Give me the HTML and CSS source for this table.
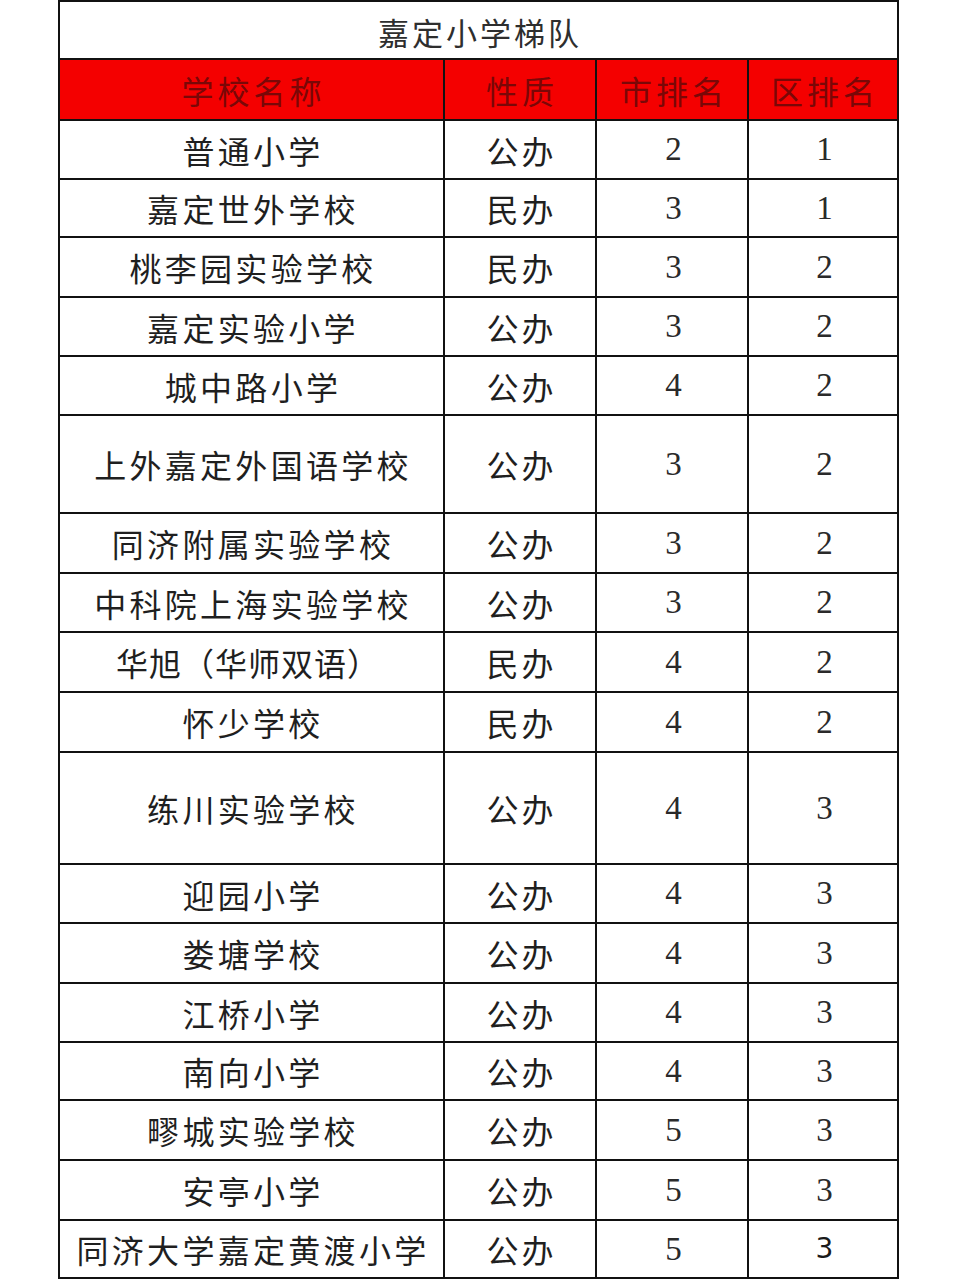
FILE: index.html
```html
<!DOCTYPE html>
<html lang="zh-CN">
<head>
<meta charset="utf-8">
<title>嘉定小学梯队</title>
<link rel="stylesheet" href="styles.css">
</head>
<body>
<div class="sheet">
  <div class="cell title">嘉定小学梯队</div>
  <div class="cell head">学校名称</div>
  <div class="cell head">性质</div>
  <div class="cell head">市排名</div>
  <div class="cell head">区排名</div>

  <div class="cell name">普通小学</div><div class="cell">公办</div><div class="cell num">2</div><div class="cell num">1</div>
  <div class="cell name">嘉定世外学校</div><div class="cell">民办</div><div class="cell num">3</div><div class="cell num">1</div>
  <div class="cell name">桃李园实验学校</div><div class="cell">民办</div><div class="cell num">3</div><div class="cell num">2</div>
  <div class="cell name">嘉定实验小学</div><div class="cell">公办</div><div class="cell num">3</div><div class="cell num">2</div>
  <div class="cell name">城中路小学</div><div class="cell">公办</div><div class="cell num">4</div><div class="cell num">2</div>
  <div class="cell name">上外嘉定外国语学校</div><div class="cell">公办</div><div class="cell num">3</div><div class="cell num">2</div>
  <div class="cell name">同济附属实验学校</div><div class="cell">公办</div><div class="cell num">3</div><div class="cell num">2</div>
  <div class="cell name">中科院上海实验学校</div><div class="cell">公办</div><div class="cell num">3</div><div class="cell num">2</div>
  <div class="cell name paren">华旭（华师双语）</div><div class="cell">民办</div><div class="cell num">4</div><div class="cell num">2</div>
  <div class="cell name">怀少学校</div><div class="cell">民办</div><div class="cell num">4</div><div class="cell num">2</div>
  <div class="cell name">练川实验学校</div><div class="cell">公办</div><div class="cell num">4</div><div class="cell num">3</div>
  <div class="cell name">迎园小学</div><div class="cell">公办</div><div class="cell num">4</div><div class="cell num">3</div>
  <div class="cell name">娄塘学校</div><div class="cell">公办</div><div class="cell num">4</div><div class="cell num">3</div>
  <div class="cell name">江桥小学</div><div class="cell">公办</div><div class="cell num">4</div><div class="cell num">3</div>
  <div class="cell name">南向小学</div><div class="cell">公办</div><div class="cell num">4</div><div class="cell num">3</div>
  <div class="cell name">疁城实验学校</div><div class="cell">公办</div><div class="cell num">5</div><div class="cell num">3</div>
  <div class="cell name">安亭小学</div><div class="cell">公办</div><div class="cell num">5</div><div class="cell num">3</div>
  <div class="cell name">同济大学嘉定黄渡小学</div><div class="cell">公办</div><div class="cell num">5</div><div class="cell num sans">3</div>
</div>
</body>
</html>
```
FILE: styles.css
```css
html, body {
  margin: 0;
  padding: 0;
  background: #ffffff;
}

.sheet {
  margin-left: 58px;
  width: 837px;
  display: grid;
  grid-template-columns: 383px 150px 150px 148px;
  grid-template-rows: 56px 59px 57px 56px 58px 57px 57px 96px 58px 57px 58px 58px 110px 57px 58px 57px 56px 58px 58px 56px;
  gap: 2px;
  padding: 2px;
  background: #111111;
  font-family: "Noto Sans CJK SC", "Liberation Serif", serif;
  color: #1f1f1f;
}

.cell {
  background: #ffffff;
  display: flex;
  align-items: center;
  justify-content: center;
  font-size: 32px;
  letter-spacing: 3px;
  line-height: 1;
  padding-left: 3px;
}

.title {
  grid-column: 1 / span 4;
  font-size: 31px;
  letter-spacing: 3px;
  color: #2e2e2e;
  padding-top: 2px;
}

.head {
  background: #f40000;
  color: #7a0707;
  font-size: 32px;
  letter-spacing: 4px;
  padding-left: 4px;
}

.name {
  letter-spacing: 3.3px;
}

.paren {
  letter-spacing: 1px;
  padding-right: 10px;
}

.num {
  font-family: "Liberation Serif", serif;
  font-size: 33px;
  letter-spacing: 0;
  color: #2a2a2a;
}

.sans {
  font-family: "DejaVu Sans", "Liberation Sans", sans-serif;
  font-size: 28px;
  color: #1a1a1a;
}
```
